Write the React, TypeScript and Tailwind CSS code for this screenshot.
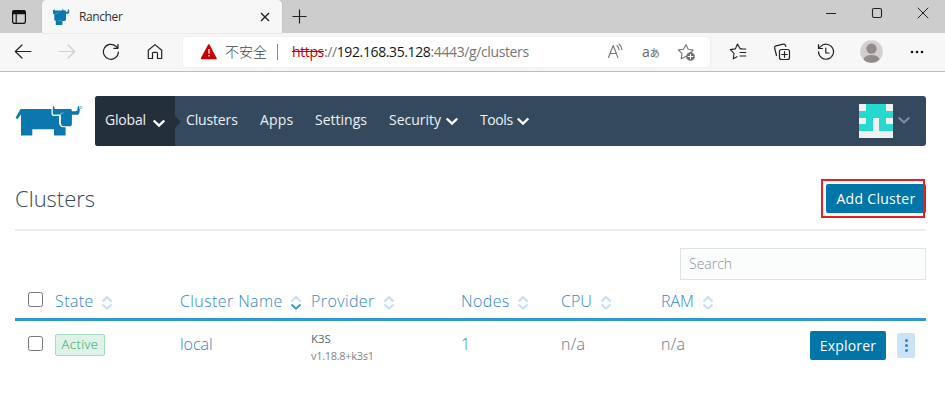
import type { ReactNode } from 'react';

type IconProps = { box: string; className: string; children: ReactNode; width?: number; color?: string };

function Icon({ box, className, children, width = 1.2, color = '#222' }: IconProps) {
  return (
    <svg viewBox={box} className={`shrink-0 ${className}`} fill="none" stroke={color} strokeWidth={width} strokeLinecap="round" strokeLinejoin="round">
      {children}
    </svg>
  );
}

function Chevron({ className, color = '#fff', width = 2.4 }: { className: string; color?: string; width?: number }) {
  return (
    <Icon box="0 0 14 10" className={`h-[10px] w-[14px] ${className}`} color={color} width={width}>
      <path d="M1.7 2.5 7 7.5 12.3 2.5" strokeLinecap="butt" strokeLinejoin="miter" />
    </Icon>
  );
}

function TabStrip() {
  return (
    <div className="flex h-[33px] bg-[#cdcdcd] pl-[11px]">
      <Icon box="11 9 16 16" className="mt-[9px] h-4 w-4" width={1.2} color="#111">
        <rect x="12.6" y="10.6" width="12.8" height="12.8" rx="2.2" />
        <path d="M13 11h12v2.7H13z" fill="#111" />
        <path d="M16.2 14v9" />
      </Icon>
      <div className="ml-[15px] flex h-[33px] w-[240px] rounded-t-[4px] bg-[#f7f7f7] pt-px shadow-[0_0_1px_#888]">
        <svg viewBox="52 8 18 18" className="mt-[7px] ml-[10px] h-[18px] w-[18px] shrink-0" fill="#0a78ae">
          <path d="M53 10.2 54.3 9.5l.7 1.1h7l.8-1.8.8 1.8H66V12l1.7-.3.3-2.7 1.2 1v3l-1.6.8H66v6l-1.2 1.2h-2.4v4H55.800v-4l-1.500-1V14.500l-1.300-1z" />
          <path d="M54.500 14q3.500-.2 4.700-2.200M57.500 20.800h4.700" fill="none" stroke="#69b0d2" strokeWidth=".6" />
        </svg>
        <span className="mt-[7px] ml-[9px] w-[52px] text-[12px] leading-[18px] tracking-[-0.4px] text-[#303030]">Rancher</span>
        <Icon box="0 0 10 10" className="mt-[11px] ml-[129px] h-[10px] w-[10px]" width={1.4}>
          <path d="m1 1 8 8M9 1 1 9" strokeLinecap="butt" />
        </Icon>
      </div>
      <Icon box="0 0 15 15" className="mt-[9px] ml-[10px] h-[15px] w-[15px]" width={1.2}>
        <path d="M7.5.5v14M.5 7.5h14" strokeLinecap="butt" />
      </Icon>
      <div className="ml-auto flex">
        <Icon box="825 8 12 12" className="mt-2 mr-[34px] h-3 w-3" width={1}>
          <path d="M826 13.5h10" strokeLinecap="butt" />
        </Icon>
        <Icon box="871 7 12 12" className="mt-[7px] mr-[34px] h-3 w-3" width={1.1}>
          <rect x="872.5" y="8.5" width="9" height="9" rx="1.5" />
        </Icon>
        <Icon box="917 7 12 12" className="mt-[7px] mr-4 h-3 w-3" width={1}>
          <path d="m918 8 10 10M928 8 918 18" />
        </Icon>
      </div>
    </div>
  );
}

function Toolbar() {
  return (
    <div className="flex h-[39px] border-b border-[#bdbdbd] bg-[#f7f7f7] pl-[14px] font-['Open_Sans','Noto_Sans_CJK_SC',sans-serif]">
      <Icon box="14 43 18 18" className="mt-[10px] h-[18px] w-[18px]">
        <path d="M31 51.5H15.5M22 45l-6.7 6.5L22 58" />
      </Icon>
      <Icon box="58 43 18 18" className="mt-[10px] ml-[26px] h-[18px] w-[18px]" color="#cfcfcf">
        <path d="M59 51.5h15.5M68 45l6.7 6.5L68 58" />
      </Icon>
      <Icon box="102 43 18 18" className="mt-[10px] ml-[26px] h-[18px] w-[18px]">
        <path d="M118.4 52a7.5 7.5 0 1 1-2.5-5.8l1.9 2M118 44.3v4h-4.2" />
      </Icon>
      <Icon box="146 43 18 18" className="mt-[10px] ml-[26px] h-[18px] w-[18px]">
        <path d="m148.3 50.3 6.7-5.7 6.7 5.7v8.2h-4.2v-5.2q0-1-1-1h-3q-1 0-1 1v5.2h-4.2z" />
      </Icon>
      <div className="mt-[4px] ml-[19px] flex h-[30px] w-[527px] rounded-[4px] bg-white shadow-[0_0_2px_#e2e2e2]">
        <svg viewBox="200 43 18 18" className="mt-[6px] ml-[17px] h-[18px] w-[18px] shrink-0">
          <path d="M208.9 45 216 58.5h-14.4z" fill="#c80000" stroke="#c80000" strokeWidth="1.6" strokeLinejoin="round" />
          <path d="M209 49v4.7M209 55v1.6" stroke="#ffdada" strokeWidth="1.4" />
        </svg>
        <span className="mt-[3px] ml-[7px] w-[43px] whitespace-nowrap font-['Noto_Sans_CJK_SC',sans-serif] text-[14px] leading-[22px] font-light text-[#444]">不安全</span>
        <span className="mt-[7px] ml-[9px] h-4 w-px bg-[#888]" />
        <span className="mt-[4px] ml-[14px] w-[300px] whitespace-nowrap text-[14px] leading-[21px] tracking-[-0.38px] text-[#767676]">
          <span className="text-[#c80000] line-through">https</span>://<span className="text-[#151515]">192.168.35.128</span>:4443/g/clusters
        </span>
        <Icon box="607 43 18 18" className="mt-[6px] ml-[15px] h-[18px] w-[18px]" color="#737373" width={1.1}>
          <path d="m608.5 57.5 4.7-12 4.7 12M610.2 53.5h6M617 45.7q2 1.6 2 4M619.2 44.2q2.7 2.2 2.7 5.5" />
        </Icon>
        <span className="mt-[2px] ml-[17px] w-[19px] whitespace-nowrap text-[#666]">
          <span className="text-[14px] leading-[20px]">a</span><span className="font-['Noto_Sans_CJK_JP',sans-serif] text-[10px]">あ</span>
        </span>
        <Icon box="678 43 18 18" className="mt-[6px] ml-[16px] h-[18px] w-[18px]" color="#737373" width={1.1}>
          <path d="m687 44.7 2.2 4.6 5 .7-3.6 3.6M686.8 56.5l-4.6 2.3.8-5.2-3.7-3.7 5.1-.7 2.6-4.5" />
          <circle cx="691.5" cy="56.5" r="3.8" fill="#6c6c6c" />
          <path d="M691.5 54.2v4.6M689.2 56.5h4.6" stroke="#fff" />
        </Icon>
      </div>
      <Icon box="729 43 18 18" className="mt-[10px] ml-[19px] h-[18px] w-[18px]" width={1.1}>
        <path d="M740.5 49h5.3M740 52.5h5.8M740 56h5.8M741.3 48.5l-1.5-.2-2.3-4.3-2.2 4.9-5 .7 3.7 3.7-.7 5.4 3.7-2" />
      </Icon>
      <Icon box="773 43 18 18" className="mt-[10px] ml-[26px] h-[18px] w-[18px]" width={1.2}>
        <rect x="779.5" y="49.5" width="10" height="10" rx="2" />
        <path d="M784.5 51.7v5.6M781.7 54.5h5.6M776.5 55.5 774.6 48q-.4-1.7 1.4-2.2l7.3-1.6q1.5-.2 2.1 1l.5 1.3" />
      </Icon>
      <Icon box="817 43 18 18" className="mt-[10px] ml-[26px] h-[18px] w-[18px]" width={1.2}>
        <path d="M818.5 51.8a7.5 7.5 0 1 0 2-5.2l-1.8 1.7M818.5 44.7v3.8h4M825.8 48v5h3.2" />
      </Icon>
      <svg viewBox="0 0 23 23" className="mt-[7px] ml-[25px] h-[23px] w-[23px] shrink-0">
        <circle cx="11.5" cy="11.5" r="11.3" fill="#d2d0ce" />
        <circle cx="11.5" cy="8.6" r="5.2" fill="#918c89" />
        <path d="M3.5 19.5q1-4.5 8-4.5t8 4.5q-3 3.3-8 3.3t-8-3.3" fill="#918c89" />
      </svg>
      <svg viewBox="0 0 14 4" className="mt-[17px] ml-[27px] h-[4px] w-[14px] shrink-0" fill="#111">
        <circle cx="2" cy="2" r="1.3" /><circle cx="7" cy="2" r="1.3" /><circle cx="12" cy="2" r="1.3" />
      </svg>
    </div>
  );
}

function Logo() {
  return (
    <svg viewBox="15 104 70 34" className="mt-[8px] h-[34px] w-[70px] shrink-0" fill="#0a78ae">
      <path d="M20.5 109h31v4.5q0 2.500 2.500 2.500h5v6q0 5.3 5 5.3h1.6v8.2H54v-6.2H32.3v6.2H21V114.5l-3.7 4.7-1.7-1.4z" />
      <path d="M52.800 114.500V107.500l1-2 1 3.500H71.200l.8 2.300h3l2.300-.6.500-4.200 1.100-.5.9 4-.6 3.500-1.300 1.300h-6v10l-1.200 1.500h-6.800q-3 0-3-3.5v-8h-6.500z" />
      <path d="M53.500 115.200q7.500 0 10-3" fill="none" stroke="#fff" strokeWidth=".5" />
      <circle cx="80.9" cy="107.5" r="1.1" fill="none" stroke="#71aacb" strokeWidth=".8" />
    </svg>
  );
}

function Avatar() {
  return (
    <svg viewBox="0 0 5 5" className="mt-[8px] h-[34px] w-[34px] shrink-0" shapeRendering="crispEdges">
      <path d="M0 0h5v5H0z" fill="#f0f0f0" />
      <path d="M1 0h3v1h1v1H4v1h1v1H3V2H2v2H0V3h1V2H0V1h1z" fill="#25d9ce" />
    </svg>
  );
}

function NavBar() {
  return (
    <header className="flex h-[50px]">
      <Logo />
      <nav className="ml-[10px] flex h-[50px] w-[831px] rounded-[3px] bg-[#34495e] text-[14px] leading-[48px] whitespace-nowrap text-[#eef1f4]">
        <div className="flex w-[80px] rounded-l-[3px] bg-[#242f3c] pl-[10px]">
          <span className="w-[47px] tracking-[-0.2px]">Global</span>
          <Chevron className="mt-[22px]" />
        </div>
        <svg viewBox="0 0 6 12" className="mt-[20px] h-[12px] w-[6px] shrink-0" fill="#242f3c"><path d="M0 0 6 6 0 12" /></svg>
        <span className="ml-[5px] w-[74px] tracking-[-0.15px]">Clusters</span>
        <span className="w-[55px] tracking-[0.2px]">Apps</span>
        <span className="w-[74px]">Settings</span>
        <span className="w-[56px]">Security</span>
        <Chevron className="mt-[20px]" />
        <span className="ml-[21px] w-[36px] tracking-[-0.4px]">Tools</span>
        <Chevron className="mt-[20px]" />
        <div className="mr-[15px] ml-auto flex">
          <Avatar />
          <Chevron className="mt-[19px] ml-[4px]" color="#83909d" width={2} />
        </div>
      </nav>
    </header>
  );
}

function Sort({ active }: { active?: boolean }) {
  return (
    <svg viewBox="0 0 12 16" className="mt-[15px] h-[16px] w-[12px] shrink-0" fill="none" strokeWidth="2">
      <path d="M1.5 6.5 6 2l4.5 4.5" stroke="#c3dff4" />
      <path d="M1.5 9.5 6 13.700 10.5 9.5" stroke={active ? '#3497da' : '#c3dff4'} />
    </svg>
  );
}

const box = 'h-[15px] w-[15px] shrink-0 rounded-[2.5px] border border-[#767676] bg-white';

function ClusterTable() {
  return (
    <section className="w-[911px]">
      <div className="flex h-[41px] border-b-[3px] border-[#3497da] pl-[12.5px] text-[16px] leading-[43px] font-light whitespace-nowrap text-[#3187cd]">
        <span className={`${box} mt-[12px] mr-[12.5px]`} />
        <span className="w-[46px] tracking-[0.4px]">State</span><Sort />
        <span className="ml-[67px] w-[110px] tracking-[0.4px]">Cluster Name</span><Sort active />
        <span className="ml-[9px] w-[72px] tracking-[0.4px]">Provider</span><Sort />
        <span className="ml-[66px] w-[56px] tracking-[0.4px]">Nodes</span><Sort />
        <span className="ml-[32px] w-[39px]">CPU</span><Sort />
        <span className="ml-[49px] w-[41px]">RAM</span><Sort />
      </div>
      <div className="flex h-[50px] pl-[12.5px] text-[16px] leading-[47px] font-light whitespace-nowrap">
        <span className={`${box} mt-[15px] mr-[12.5px]`} />
        <div className="w-[125px]">
          <span className="mt-[13px] flex h-[22px] w-[50px] justify-center rounded-[2px] border border-[#a5ddbc] bg-[#dff2e8] text-[13px] leading-[19px] tracking-[0.4px] text-[#2c9f5a]">Active</span>
        </div>
        <span className="w-[131px] text-[#3187cd]">local</span>
        <div className="w-[150px] pt-[9px] leading-[18px] font-normal">
          <div className="text-[11.5px] text-[#666]">K3S</div>
          <div className="-mt-px text-[11px] tracking-[-0.3px] text-[#858585]">v1.18.8+k3s1</div>
        </div>
        <span className="w-[100px] text-[#3187cd]">1</span>
        <span className="w-[100px] tracking-[0.3px] text-[#6c7680]">n/a</span>
        <span className="w-[149px] tracking-[0.3px] text-[#6c7680]">n/a</span>
        <button className="mt-[10px] h-[29px] w-[76px] rounded-[2px] bg-[#0075a8] text-[14px] leading-[27px] font-normal tracking-[0.2px] text-white">Explorer</button>
        <button className="mt-[12px] ml-[11px] flex h-[25px] w-[18px] flex-col items-center gap-[2px] rounded-[2px] bg-[#cbe3f6] pt-[6px]">
          <i className="h-[3px] w-[3px] rounded-full bg-[#2785cd]" />
          <i className="h-[3px] w-[3px] rounded-full bg-[#2785cd]" />
          <i className="h-[3px] w-[3px] rounded-full bg-[#2785cd]" />
        </button>
      </div>
    </section>
  );
}

export default function App() {
  return (
    <div className="h-[401px] w-[945px] overflow-hidden bg-white font-['Open_Sans','Noto_Sans_CJK_SC',sans-serif]">
      <TabStrip />
      <Toolbar />
      <main className="pt-[24px] pl-[15px]">
        <NavBar />
        <div className="flex h-[85px] w-[911px] justify-between border-b-2 border-[#e8eeee]">
          <h1 className="mt-[36px] text-[22px] leading-[32px] font-light text-[#34495e]">Clusters</h1>
          <div className="relative mt-[38px] h-[29px] w-[100px]">
            <button className="h-[29px] w-[100px] rounded-[2px] bg-[#0075a8] text-[14px] leading-[28px] tracking-[0.3px] whitespace-nowrap text-white">Add Cluster</button>
            <span className="absolute -top-[5px] -left-[5px] h-[39px] w-[104px] border-2 border-[#ee1c25]" />
          </div>
        </div>
        <div className="mt-[17px] ml-[665px] h-[32px] w-[246px] border border-[#dce3e3] bg-[#fbfdfd] pl-[8px] text-[14px] leading-[29px] font-light text-[#8a9499]">Search</div>
        <ClusterTable />
      </main>
    </div>
  );
}
